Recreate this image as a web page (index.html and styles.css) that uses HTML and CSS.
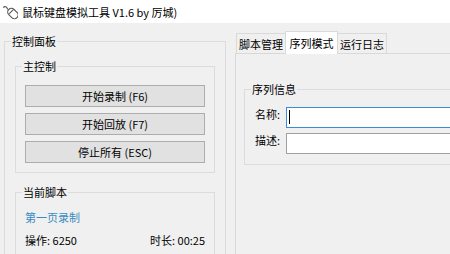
FILE: index.html
```html
<!DOCTYPE html>
<html lang="zh-CN">
<head>
<meta charset="utf-8">
<title>鼠标键盘模拟工具</title>
<link rel="stylesheet" href="styles.css">
</head>
<body>
<div class="window">
  <header class="titlebar">
    <svg class="app-icon" width="16" height="16" viewBox="0 0 16 16">
      <g fill="none" stroke="#555" stroke-width="1.1" stroke-linecap="round">
        <path d="M1.5 3.2c1.6-1.2 3.4-0.4 4 1.8"/>
        <rect x="7.2" y="3.8" width="7.4" height="11.6" rx="3.7" transform="rotate(-45 10.9 9.6)"/>
        <path d="M7.6 9.4l3.2-3.2"/>
      </g>
    </svg>
    <span class="title">鼠标键盘模拟工具 V1.6 by 厉城)</span>
  </header>
  <main class="client">
    <fieldset class="group control-panel">
      <legend>控制面板</legend>
      <fieldset class="group sub">
        <legend>主控制</legend>
        <div class="buttons">
          <button class="btn">开始录制 (F6)</button>
          <button class="btn">开始回放 (F7)</button>
          <button class="btn">停止所有 (ESC)</button>
        </div>
      </fieldset>
      <fieldset class="group sub current">
        <legend>当前脚本</legend>
        <div class="script-name">第一页录制</div>
        <div class="script-stats"><span>操作: 6250</span><span>时长: 00:25</span></div>
      </fieldset>
    </fieldset>
    <section class="tabcontrol">
      <div class="tabstrip">
        <div class="tab">脚本管理</div>
        <div class="tab active">序列模式</div>
        <div class="tab">运行日志</div>
      </div>
      <div class="tabpage">
        <fieldset class="group seq">
          <legend>序列信息</legend>
          <div class="field">
            <label>名称:</label>
            <div class="textbox focused"><span class="caret"></span></div>
          </div>
          <div class="field">
            <label>描述:</label>
            <div class="textbox"></div>
          </div>
        </fieldset>
      </div>
    </section>
  </main>
</div>
</body>
</html>
```
FILE: styles.css
```css
html, body {
  margin: 0;
  padding: 0;
}
body {
  width: 450px;
  height: 254px;
  overflow: hidden;
  background: #f0f0f0;
  font-family: "Noto Sans CJK SC", "Noto Sans", sans-serif;
  font-size: 11px;
  line-height: 12px;
  color: #000;
}
.window {
  width: 450px;
  height: 254px;
  overflow: hidden;
}
.titlebar {
  height: 23px;
  background: #fff;
  display: flex;
  align-items: center;
  padding-left: 2px;
  box-sizing: border-box;
}
.app-icon {
  margin-right: 4px;
  flex: none;
}
.title {
  font-size: 11px;
  line-height: 12px;
}
.client {
  display: flex;
  align-items: flex-start;
  padding: 8px 0 0 4px;
  height: 231px;
  box-sizing: border-box;
  overflow: hidden;
}
.group {
  margin: 0;
  border: 1px solid #dcdcdc;
  padding: 13px 9px 9px;
  min-width: 0;
  box-sizing: border-box;
}
.group > legend {
  padding: 0 1px;
  margin-left: -3px;
  line-height: 12px;
  height: 12px;
}
.control-panel {
  width: 222px;
  height: 240px;
  flex: none;
  margin-top: 4px;
  padding: 13px 10px 0;
}
.control-panel > legend {
  margin-left: -4px;
}
.current {
  margin-top: 13px;
  height: 80px;
}
.buttons {
  display: flex;
  flex-direction: column;
  gap: 6px;
}
.btn {
  height: 22px;
  margin: 0;
  padding: 0;
  border: 1px solid #adadad;
  background: #e1e1e1;
  font: inherit;
  line-height: 12px;
  color: #000;
}
.script-name {
  color: #3a8cc0;
}
.script-stats {
  display: flex;
  justify-content: space-between;
  margin-top: 11px;
}
.tabcontrol {
  margin-left: 9px;
  width: 240px;
  flex: none;
}
.tabstrip {
  display: flex;
  align-items: flex-end;
  height: 22px;
  padding-left: 1px;
}
.tab {
  width: 50px;
  height: 20px;
  box-sizing: border-box;
  border: 1px solid #d9d9d9;
  border-bottom: none;
  padding-top: 4px;
  text-align: center;
  background: #f0f0f0;
  flex: none;
}
.tab.active {
  width: 53px;
  height: 23px;
  margin: 0 -1px -1px -1px;
  padding-top: 5px;
  background: #fff;
  position: relative;
  z-index: 1;
}
.tabpage {
  border: 1px solid #d9d9d9;
  padding: 29px 0 0 8px;
  height: 220px;
  box-sizing: border-box;
  background: #f0f0f0;
}
.seq {
  width: 240px;
  padding: 12px 10px 10px;
}
.seq > legend {
  margin-left: -4px;
}
.field {
  display: flex;
  align-items: flex-start;
}
.field + .field {
  margin-top: 5px;
}
.field label {
  width: 31px;
  flex: none;
  padding-top: 1px;
}
.textbox {
  flex: 1;
  height: 21px;
  border: 1px solid #a0a0a0;
  background: #fff;
  box-sizing: border-box;
}
.textbox.focused {
  border-color: #3c8ad8;
}
.caret {
  display: block;
  width: 1px;
  height: 14px;
  margin: 2px 0 0 2px;
  background: #000;
}
```
